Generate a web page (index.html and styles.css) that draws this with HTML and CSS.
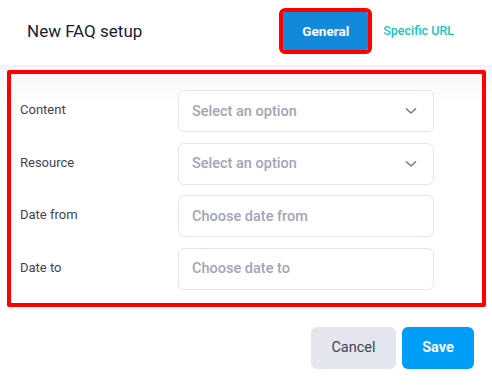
FILE: index.html
```
<!DOCTYPE html>
<html>

<head>
  <title>New FAQ setup</title>
  <link rel="stylesheet" href="styles.css">
</head>

<body>
  <div class="modal">
    <div class="modal-header">
      <h2 class="modal-title">New FAQ setup</h2>
      <div class="tabs">
        <button class="tab tab-active">General</button>
        <button class="tab">Specific URL</button>
      </div>
    </div>

    <div class="modal-body">
      <form class="faq-form">
        <div class="form-row">
          <label class="form-label">Content</label>
          <div class="select">
            <span class="placeholder">Select an option</span>
            <svg class="chevron" width="12" height="8" viewBox="0 0 12 8">
              <path d="M1.5 1.8 L6 6 L10.5 1.8" fill="none" stroke="#7e8299" stroke-width="1.6" stroke-linecap="round" stroke-linejoin="round"/>
            </svg>
          </div>
        </div>
        <div class="form-row">
          <label class="form-label">Resource</label>
          <div class="select">
            <span class="placeholder">Select an option</span>
            <svg class="chevron" width="12" height="8" viewBox="0 0 12 8">
              <path d="M1.5 1.8 L6 6 L10.5 1.8" fill="none" stroke="#7e8299" stroke-width="1.6" stroke-linecap="round" stroke-linejoin="round"/>
            </svg>
          </div>
        </div>
        <div class="form-row">
          <label class="form-label">Date from</label>
          <input type="text" class="input" placeholder="Choose date from">
        </div>
        <div class="form-row">
          <label class="form-label">Date to</label>
          <input type="text" class="input" placeholder="Choose date to">
        </div>
      </form>
    </div>

    <div class="modal-footer">
      <button class="btn btn-light">Cancel</button>
      <button class="btn btn-primary">Save</button>
    </div>
  </div>
</body>

</html>
```

FILE: styles.css
```
body {
  margin: 0;
  background-color: #FFF;
  font-family: Roboto, "Liberation Sans", sans-serif;
}

.modal {
  width: 492px;
}

.modal-header {
  display: flex;
  align-items: center;
  justify-content: space-between;
  padding: 0 23px 0 27px;
  border-bottom: 1px solid #EFF0F4;
  box-sizing: border-box;
  height: 66px;
}

.modal-title {
  margin: 0;
  font-size: 17px;
  font-weight: 400;
  color: #181C32;
  padding-bottom: 4px;
}

.tabs {
  display: flex;
  align-items: center;
  margin-top: -4px;
}

.tab {
  font-family: inherit;
  height: 38px;
  padding: 0 15px;
  border: none;
  border-radius: 2px;
  background: none;
  color: #1BC5BD;
  font-size: 12.5px;
  font-weight: 500;
}

.tab-active {
  width: 85px;
  background-color: #1289DB;
  color: #FFF;
  font-size: 13.5px;
  font-weight: 700;
  outline: 4px solid #FF0000;
}

.modal-body {
  background: linear-gradient(#F4F5F8, #FFF 40px);
  padding-top: 4px;
}

.faq-form {
  margin: 0 6px -2px 7px;
  padding: 20px 52px 17px 13px;
  outline: 4px solid #FF0000;
  outline-offset: -4px;
  border-radius: 2px;
  display: flex;
  flex-direction: column;
  gap: 10.5px;
}

.form-row {
  display: flex;
  align-items: center;
}

.form-label {
  width: 158px;
  font-size: 13px;
  font-weight: 400;
  color: #3F4254;
  padding-bottom: 3px;
}

.select,
.input {
  flex: 1;
  height: 42px;
  box-sizing: border-box;
  border: 1px solid #E4E6EF;
  border-radius: 6px;
  background-color: #FFF;
  padding: 0 14px 0 13px;
  font-family: inherit;
  font-size: 14.5px;
  font-weight: 500;
  color: #3F4254;
}

.select {
  display: flex;
  align-items: center;
  justify-content: space-between;
}

.placeholder,
.input::placeholder {
  color: #A1A5B7;
}

.chevron {
  margin-right: 2px;
}

.modal-footer {
  display: flex;
  justify-content: flex-end;
  gap: 6px;
  padding: 21px 18px 0 0;
  border-top: 1px solid #EFF0F4;
  position: relative;
  z-index: -1;
}

.btn {
  height: 42px;
  border: none;
  border-radius: 6px;
  font-family: inherit;
  font-size: 14.5px;
}

.btn-light {
  width: 85px;
  background-color: #E4E6EF;
  color: #3F4254;
  font-weight: 400;
}

.btn-primary {
  width: 72px;
  background-color: #009EF7;
  color: #FFF;
  font-weight: 700;
}
```
